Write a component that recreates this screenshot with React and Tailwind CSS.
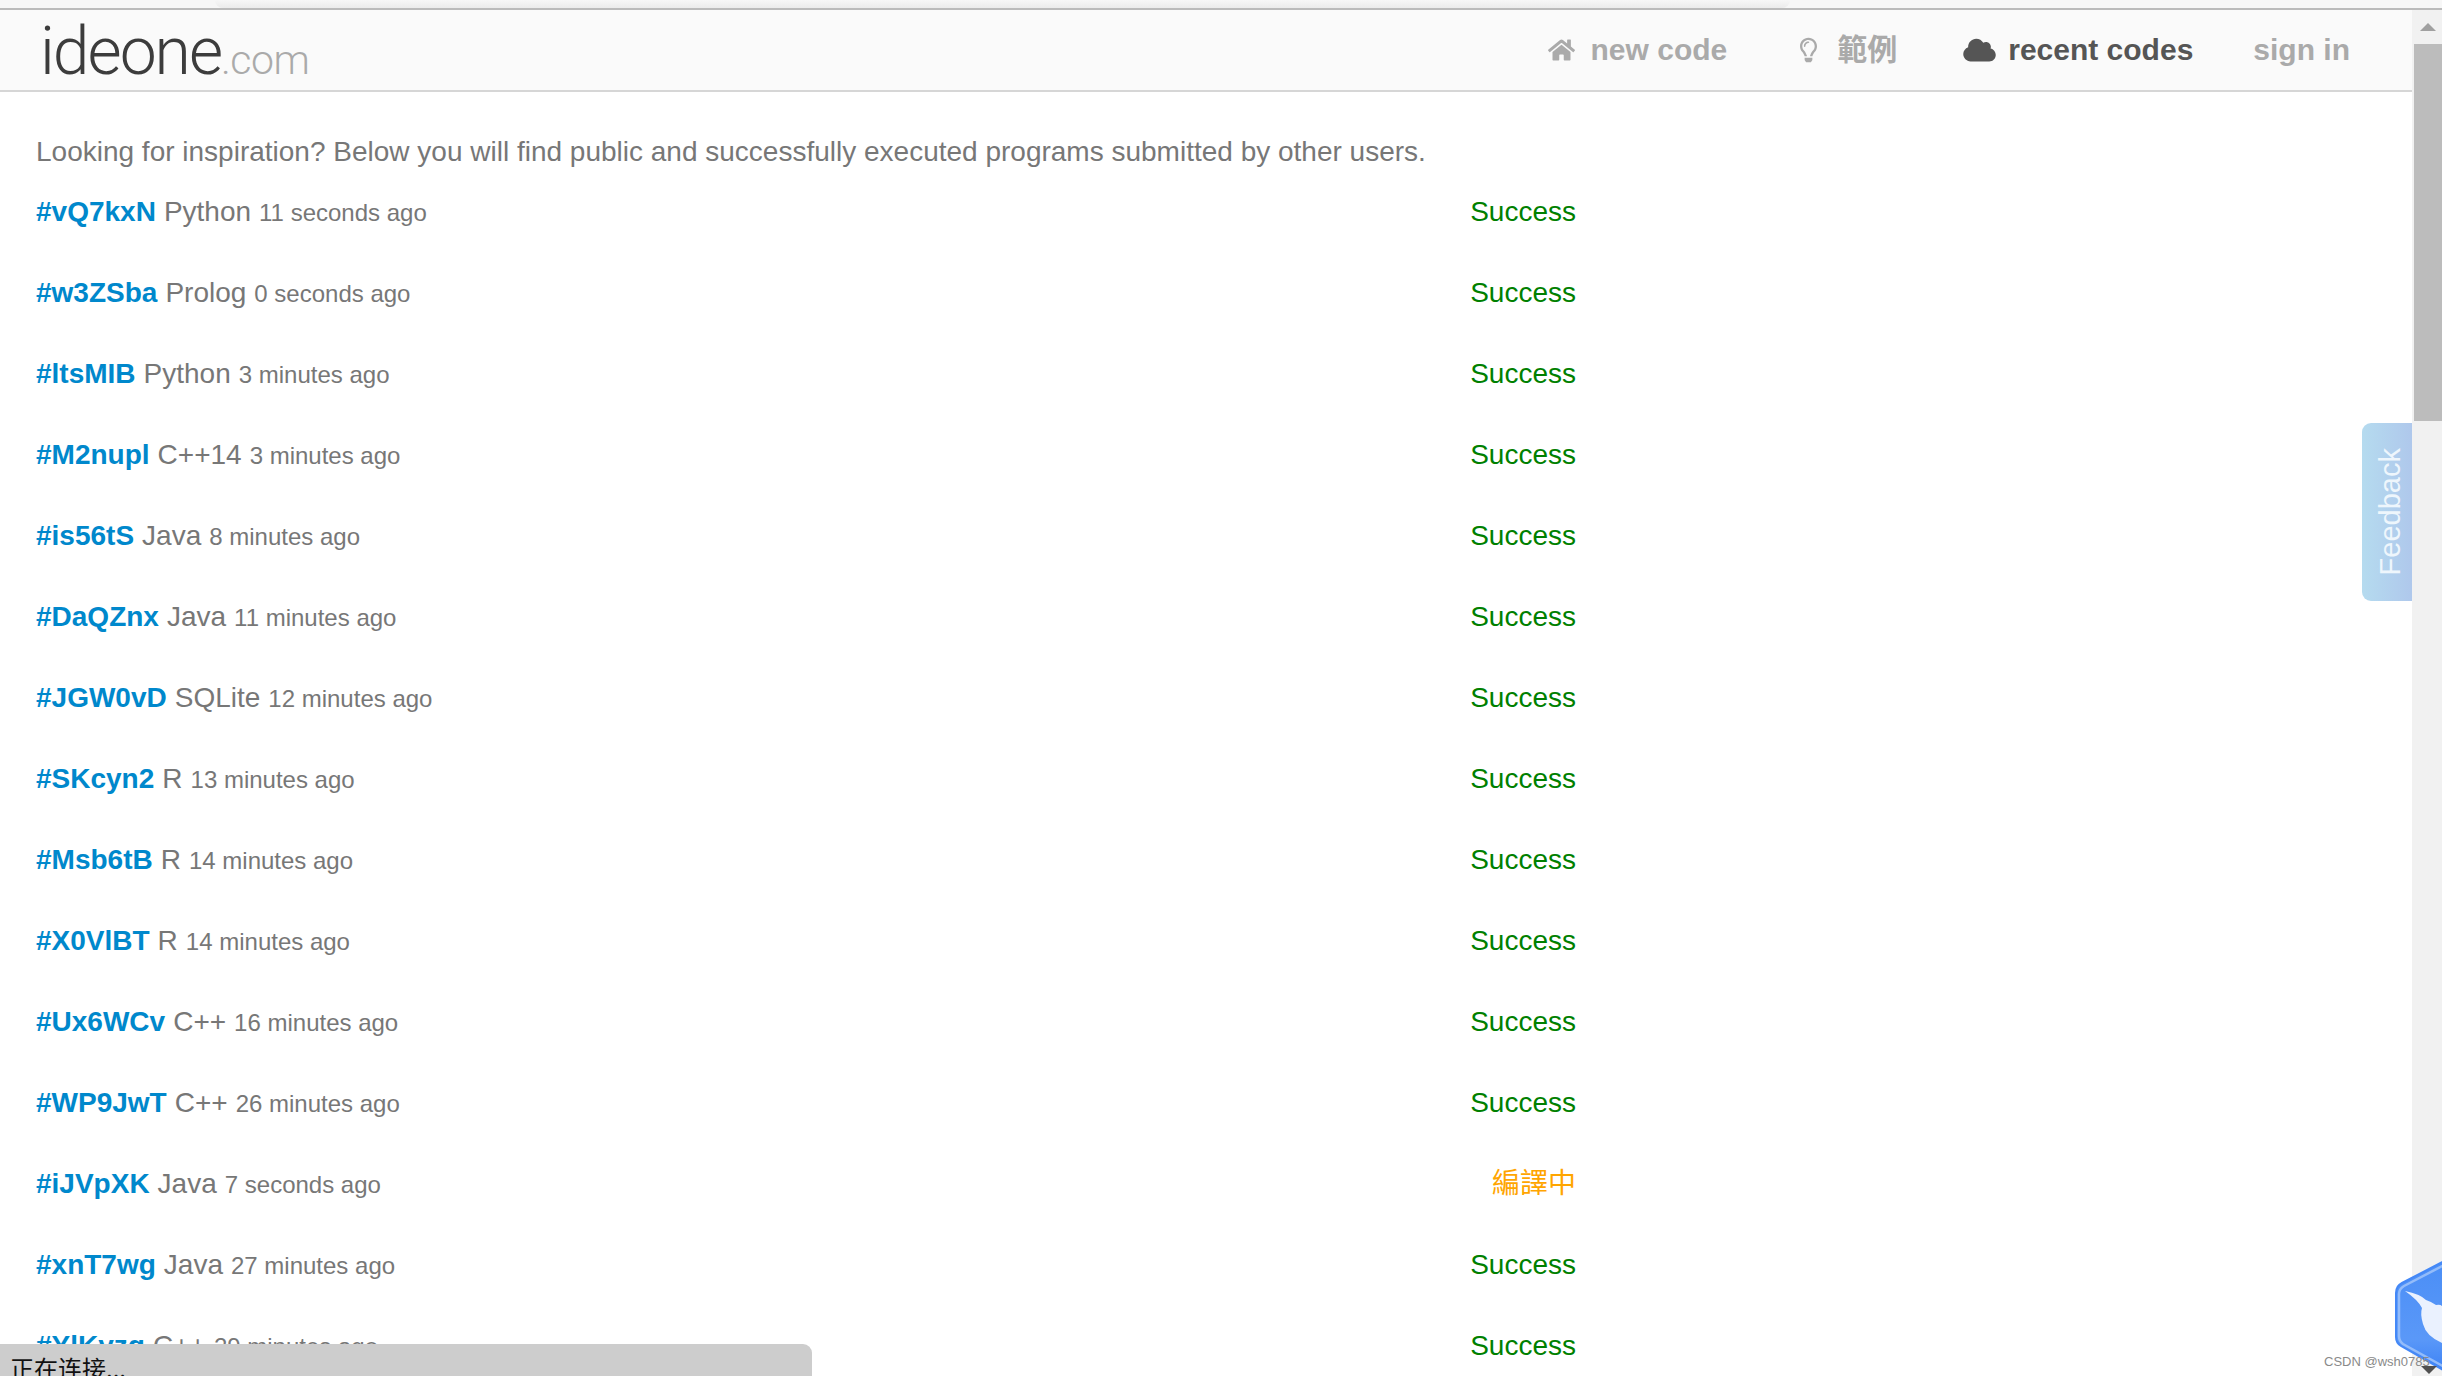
import React from "react";
import { FaHome, FaRegLightbulb, FaCloud } from "react-icons/fa";

const rows = [
  ["#vQ7kxN", "Python", "11 seconds ago"],
  ["#w3ZSba", "Prolog", "0 seconds ago"],
  ["#ltsMIB", "Python", "3 minutes ago"],
  ["#M2nupl", "C++14", "3 minutes ago"],
  ["#is56tS", "Java", "8 minutes ago"],
  ["#DaQZnx", "Java", "11 minutes ago"],
  ["#JGW0vD", "SQLite", "12 minutes ago"],
  ["#SKcyn2", "R", "13 minutes ago"],
  ["#Msb6tB", "R", "14 minutes ago"],
  ["#X0VlBT", "R", "14 minutes ago"],
  ["#Ux6WCv", "C++", "16 minutes ago"],
  ["#WP9JwT", "C++", "26 minutes ago"],
  ["#iJVpXK", "Java", "7 seconds ago", "編譯中"],
  ["#xnT7wg", "Java", "27 minutes ago"],
  ["#YlKyzq", "C++", "29 minutes ago"],
];

const font = "font-['Liberation_Sans','Noto_Sans_CJK_TC',sans-serif]";

function Row({ id, lang, time, status }) {
  return (
    <div className="flex h-[81px] w-[1540px] shrink-0 items-center justify-between">
      <div className="flex items-baseline">
        <a className="text-[28px] font-bold text-[#0088cc]">{id}</a>
        <span className="ml-[8px] text-[28px] text-[#777]">{lang}</span>
        <span className="ml-[8px] text-[24px] text-[#777]">{time}</span>
      </div>
      {status ? (
        <span className="text-[28px] text-[#ffa500]">{status}</span>
      ) : (
        <span className="text-[28px] text-[#008000]">Success</span>
      )}
    </div>
  );
}

export default function App() {
  return (
    <div className={`relative flex h-[1376px] w-[2442px] flex-col overflow-hidden bg-white ${font}`}>
      <div className="h-[8px] shrink-0 bg-[#f7f7f7]">
        <div className="ml-[215px] h-full w-[1575px] rounded-b-[8px] bg-gradient-to-b from-[#f7f7f7] to-[#ebebeb]" />
      </div>
      <div className="h-[2px] shrink-0 bg-[#bbbbbb]" />
      <div className="flex min-h-0 flex-1">
        <div className="flex min-w-0 flex-1 flex-col">
          <header className="flex h-[82px] shrink-0 items-center justify-between border-b-2 border-[#d6d6d6] bg-[#fafafa] pl-[40px] pr-[62px]">
            <div className="mt-[3px] flex items-baseline font-['Roboto',sans-serif] font-light leading-none tracking-[-2px]">
              <span className="text-[66px] text-[#3c3c3c]">ideone</span>
              <span className="text-[41px] tracking-[-0.5px] text-[#aaa]">.com</span>
            </div>
            <nav className="mb-[1px] flex items-center text-[30px] font-bold text-[#aaa]">
              <span className="flex items-center"><FaHome className="h-[24px] w-[27px]" /><span className="ml-[16px]">new code</span></span>
              <span className="ml-[73px] flex items-center"><FaRegLightbulb className="h-[28px] w-[17px]" /><span className="ml-[20px]">範例</span></span>
              <span className="ml-[66px] flex items-center text-[#555]"><FaCloud className="h-[26px] w-[33px]" /><span className="ml-[12px]">recent codes</span></span>
              <span className="ml-[60px]">sign in</span>
            </nav>
          </header>
          <main className="pl-[36px]">
            <p className="mt-[42px] h-[36px] text-[28px] leading-[36px] text-[#777]">Looking for inspiration? Below you will find public and successfully executed programs submitted by other users.</p>
            <div className="mt-[1px] flex flex-col">
              {rows.map((r) => (
                <Row key={r[0]} id={r[0]} lang={r[1]} time={r[2]} status={r[3]} />
              ))}
            </div>
          </main>
        </div>
        <aside className="flex w-[30px] shrink-0 flex-col bg-[#f1f1f1]">
          <div className="flex h-[34px] items-center justify-center pl-[2px]">
            <div className="h-0 w-0 border-x-[8px] border-b-[8px] border-x-transparent border-b-[#a0a0a0]" />
          </div>
          <div className="ml-[2px] h-[377px] bg-[#bcbcbc]" />
        </aside>
      </div>

      <div className="absolute left-[2362px] top-[423px] flex h-[178px] w-[50px] items-center justify-center rounded-l-[9px] bg-gradient-to-r from-[#b5dbef] to-[#afc8ec] pl-[8px]">
        <span className="-rotate-90 whitespace-nowrap text-[29px] text-[#eef6fc]">Feedback</span>
      </div>

      <div className="absolute bottom-0 left-0 h-[32px] w-[812px] overflow-hidden rounded-tr-[9px] bg-[#cdcdcd] pl-[10px] pt-[8px] text-[24px] leading-[32px] text-[#111]">
        <span className="font-['Noto_Sans_CJK_SC',sans-serif]">正在连接...</span>
      </div>

      <svg className="absolute left-[2390px] top-[1256px]" width="52" height="120" viewBox="0 0 52 120">
        <defs>
          <linearGradient id="hexfill" x1="0" y1="0" x2="0" y2="1">
            <stop offset="0" stopColor="#4a8ef6" />
            <stop offset="0.7" stopColor="#5a98f8" />
            <stop offset="1" stopColor="#3a80f5" />
          </linearGradient>
        </defs>
        <path d="M60 2 L12 27 Q6 30 6 37 L6 81 Q6 87 11 90 L60 118 Z" fill="url(#hexfill)" stroke="#4488f7" strokeWidth="2" />
        <path d="M60 6 L14 30 Q9 33 9 38 L9 80 Q9 85 13 88 L60 114" fill="none" stroke="#93bcfa" strokeWidth="2.5" />
        <path d="M15 35 Q30 38 36 44 Q42 46 46 49 Q50 48 52 50 L52 87 Q36 80 33 68 Q30 58 32 52 Q28 44 15 35 Z" fill="#eaf1fe" />
      </svg>

      <span className="absolute left-[2324px] top-[1354px] text-[13px] leading-[16px] text-[#8a8a8a]">CSDN @wsh0785</span>
      <div className="absolute left-[2421px] top-[1366px] h-0 w-0 border-x-[8px] border-t-[8px] border-x-transparent border-t-[#505050]" />
    </div>
  );
}
